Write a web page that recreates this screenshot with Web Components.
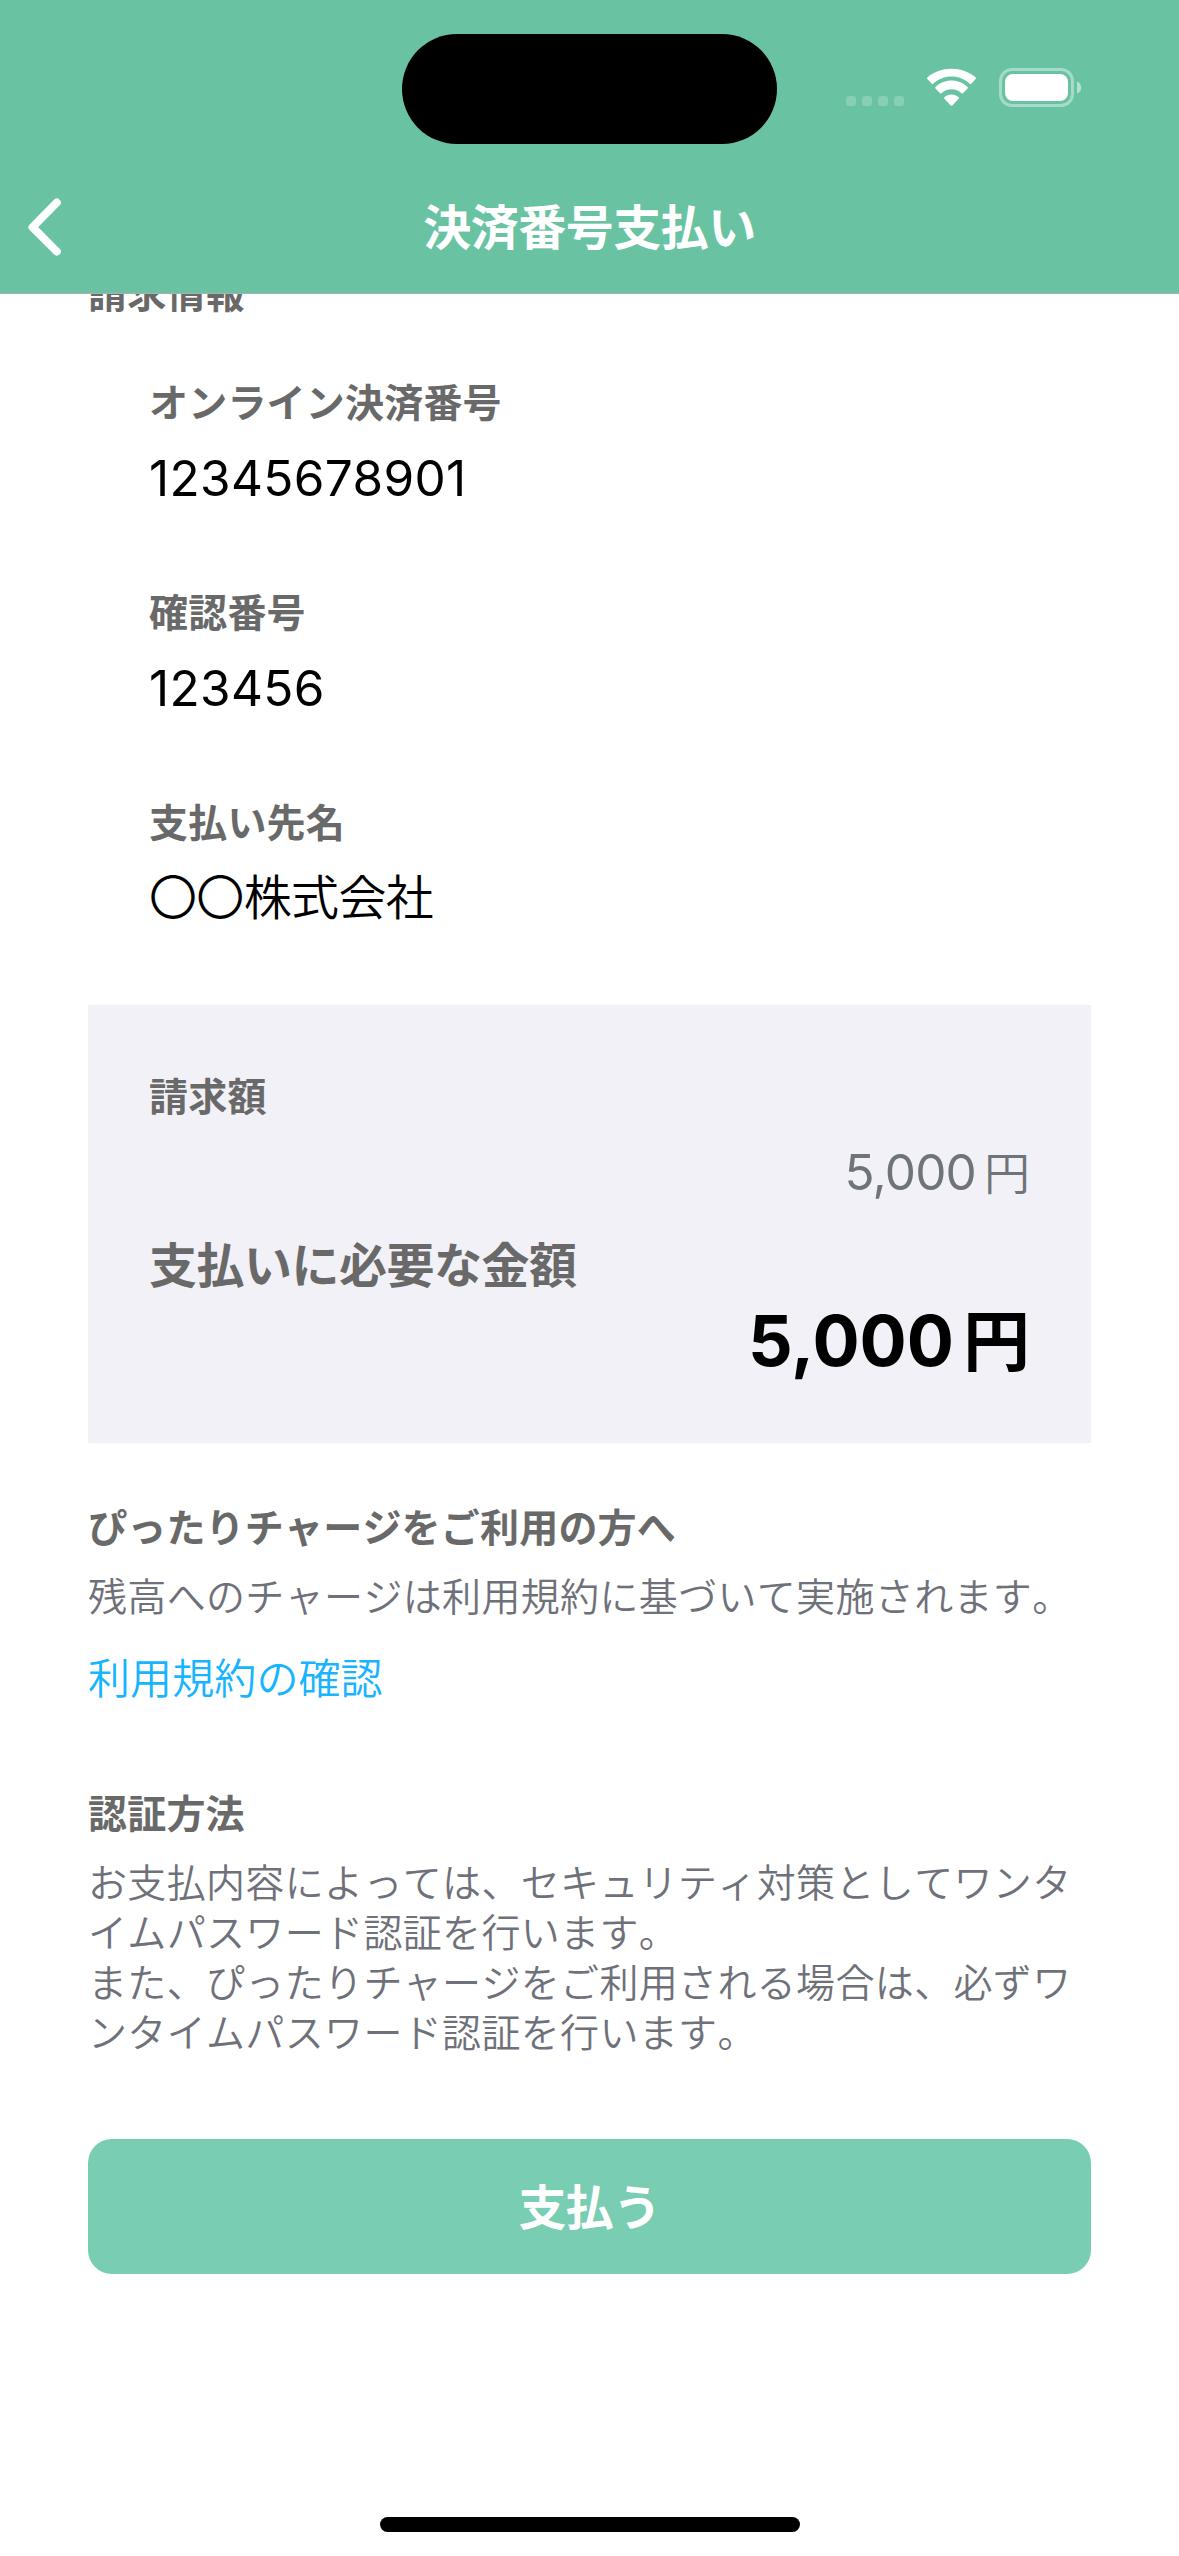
<!DOCTYPE html>
<html lang="ja">
<head>
<meta charset="utf-8">
<title>決済番号支払い</title>
<style>
html, body { margin: 0; background: #fff; }
body { font-family: "Noto Sans CJK JP", sans-serif; font-kerning: none; width: 1179px; height: 2556px; overflow: hidden; }
</style>
</head>
<body>
<payment-screen></payment-screen>
<script>
function define(name, html) {
  const template = document.createElement('template');
  template.innerHTML = html;
  customElements.define(name, class extends HTMLElement {
    constructor() {
      super();
      this.attachShadow({ mode: 'open' }).appendChild(template.content.cloneNode(true));
    }
  });
}

define('status-bar', `
<style>
:host { display: grid; grid-template-columns: 402px 375px 1fr; height: 158px; box-sizing: border-box; padding-top: 34px; align-items: start; }
.island { grid-column: 2; height: 110px; border-radius: 55px; background: #000; }
.icons { display: flex; align-items: flex-start; padding: 34px 0 0 69px; }
svg { display: block; }
.wifi { margin-left: 22px; }
.battery { margin-left: 22px; }
</style>
<div class="island"></div>
<div class="icons">
  <svg class="signal" width="58" height="39" viewBox="0 0 58 39" fill="#fff" fill-opacity=".2"><rect x="0" y="28" width="10" height="10" rx="3"/><rect x="16" y="28" width="10" height="10" rx="3"/><rect x="32" y="28" width="10" height="10" rx="3"/><rect x="48" y="28" width="10" height="10" rx="3"/></svg>
  <svg class="wifi" width="51" height="39" viewBox="0 0 51 39" fill="#fff"><path d="M25.5 8.6c7 0 13.500 2.700 18.300 7.100.4.400 1 .4 1.400 0l4.400-4.600c.5-.500.5-1.200 0-1.700C43.100 3.800 34.700.8 25.500.8S7.900 3.800 1.400 9.400c-.5.500-.5 1.200 0 1.700l4.400 4.600c.4.400 1 .4 1.400 0C12 11.300 18.500 8.600 25.500 8.600z"/><path d="M25.500 21.300c3.900 0 7.400 1.500 10.100 3.900.4.400 1 .4 1.400 0l4.500-4.600c.5-.5.5-1.200 0-1.700-4.200-4-9.800-6.300-16-6.300s-11.800 2.300-16 6.300c-.5.500-.5 1.200 0 1.700l4.500 4.600c.4.400 1 .4 1.400 0 2.700-2.400 6.200-3.900 10.100-3.900z"/><path d="M32.600 29.200c.5.400.5 1.100 0 1.600l-6.300 6.600c-.5.500-1.100.5-1.600 0l-6.300-6.600c-.5-.5-.5-1.200 0-1.600 2-1.700 4.400-2.700 7.100-2.700s5.200 1 7.100 2.700z"/></svg>
  <svg class="battery" width="83" height="39" viewBox="0 0 83 39"><rect x="1.500" y="1.500" width="72" height="36" rx="11.500" fill="none" stroke="#fff" stroke-opacity=".4" stroke-width="3"/><rect x="6" y="6" width="63" height="27" rx="8" fill="#fff"/><path d="M78 13.500c2.600 1 4.200 3.400 4.200 6.100s-1.600 5.100-4.200 6.100z" fill="#fff" fill-opacity=".5"/></svg>
</div>`);

define('nav-bar', `
<style>
:host { display: block; position: relative; z-index: 1; height: 294px; box-sizing: border-box; background: #69c3a3; border-bottom: 1px solid #aab1ae; color: #fff; }
.row { display: grid; grid-template-columns: 100px 1fr 100px; align-items: center; height: 131px; }
svg { display: block; margin: 6px 0 0 28px; }
h1 { margin: 0; text-align: center; font-size: 48px; line-height: 60px; font-weight: 600; letter-spacing: -.5px; }
</style>
<status-bar></status-bar>
<div class="row">
  <svg width="33" height="58" viewBox="0 0 33 58" fill="none" stroke="#fff" stroke-width="8" stroke-linecap="round" stroke-linejoin="round"><path d="M28.800 4.500 4.500 29.200 28.800 53.500"/></svg>
  <h1><slot></slot></h1>
</div>`);

define('section-heading', `
<style>
:host { display: block; font-size: 39px; line-height: 56px; font-weight: 600; color: #696969; letter-spacing: .2px; white-space: nowrap; }
</style><slot></slot>`);

define('info-field', `
<style>
:host { display: flex; flex-direction: column; gap: 20px; }
.value { font-family: Inter, "Noto Sans CJK JP", sans-serif; font-size: 48px; line-height: 60px; font-weight: 350; letter-spacing: -.65px; color: #000; }
:host([numeric]) .value { font-kerning: auto; font-size: 49.5px; font-weight: 400; letter-spacing: .35px; }
</style>
<section-heading><slot name="label"></slot></section-heading>
<div class="value"><slot></slot></div>`);

define('yen-amount', `
<style>
:host { display: flex; justify-content: flex-end; align-items: baseline; gap: 8px; font-family: Inter, "Noto Sans CJK JP", sans-serif; line-height: 60px; font-size: 49.5px; color: #6f737a; }
.num { font-kerning: auto; letter-spacing: -.8px; }
.unit { font-size: 46px; font-weight: 350; }
:host([strong]) { font-size: 70px; line-height: 90px; font-weight: 700; color: #000; gap: 9px; }
:host([strong]) .num { letter-spacing: 0; }
:host([strong]) .unit { font-size: 67px; font-weight: 600; }
</style>
<span class="num"><slot></slot></span><span class="unit">円</span>`);

define('billing-card', `
<style>
:host { display: block; box-sizing: border-box; height: 438px; margin-top: 77px; padding: 61px 61px 0 61px; background: #f2f1f7; }
yen-amount { margin-top: 20px; }
.total { margin-top: 29px; font-size: 48px; line-height: 60px; letter-spacing: -.5px; }
.total + yen-amount { margin-top: 4px; }
</style>
<section-heading>請求額</section-heading>
<yen-amount>5,000</yen-amount>
<section-heading class="total">支払いに必要な金額</section-heading>
<yen-amount strong>5,000</yen-amount>`);

define('note-block', `
<style>
:host { display: block; }
.body { margin-top: 16px; font-size: 39px; line-height: 50px; font-weight: 350; letter-spacing: .34px; color: #6f717a; }
::slotted(a) { display: block; margin-top: 29px; font-size: 42px; line-height: 56px; font-weight: 350; letter-spacing: .1px; color: #18b4ff; text-decoration: none; }
</style>
<section-heading><slot name="heading"></slot></section-heading>
<div class="body"><slot></slot></div>
<slot name="link"></slot>`);

define('primary-button', `
<style>
:host { display: block; }
button { display: block; width: 100%; height: 135px; padding: 0 0 5px; border: 0; border-radius: 24px; background: #79cdb3; color: #fff; font: 600 48px/60px "Noto Sans CJK JP", sans-serif; letter-spacing: -.65px; }
</style>
<button type="button"><slot></slot></button>`);

define('payment-screen', `
<style>
:host { display: flex; flex-direction: column; width: 1179px; height: 2556px; background: #fff; overflow: hidden; }
main { flex: 1; margin-top: -31px; padding: 0 88px; }
.fields { display: flex; flex-direction: column; gap: 74px; padding: 53px 0 0 61px; }
.first { margin-top: 54px; }
.second { margin-top: 79px; }
primary-button { margin-top: 84px; }
.home { align-self: center; width: 420px; height: 15px; margin-bottom: 24px; border-radius: 8px; background: #000; }
</style>
<nav-bar>決済番号支払い</nav-bar>
<main>
  <section-heading>請求情報</section-heading>
  <div class="fields">
    <info-field numeric><span slot="label">オンライン決済番号</span>12345678901</info-field>
    <info-field numeric><span slot="label">確認番号</span>123456</info-field>
    <info-field><span slot="label">支払い先名</span>〇〇株式会社</info-field>
  </div>
  <billing-card></billing-card>
  <note-block class="first"><span slot="heading">ぴったりチャージをご利用の方へ</span>残高へのチャージは利用規約に基づいて実施されます。<a slot="link" href="#">利用規約の確認</a></note-block>
  <note-block class="second"><span slot="heading">認証方法</span>お支払内容によっては、セキュリティ対策としてワンタイムパスワード認証を行います。<br>また、ぴったりチャージをご利用される場合は、必ずワンタイムパスワード認証を行います。</note-block>
  <primary-button>支払う</primary-button>
</main>
<div class="home"></div>`);
</script>
</body>
</html>
